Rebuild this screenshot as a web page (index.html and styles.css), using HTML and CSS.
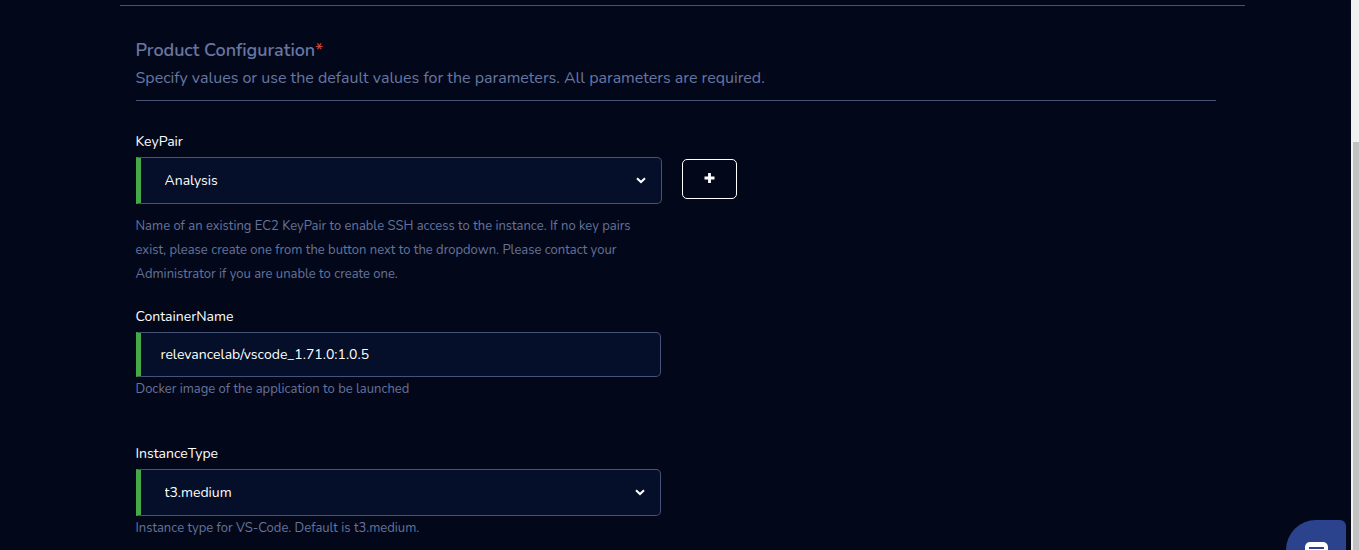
FILE: index.html
```html
<!DOCTYPE html>
<html lang="en">
<head>
  <meta charset="utf-8">
  <title>Product Configuration</title>
  <link rel="stylesheet" href="styles.css">
</head>
<body>
  <div class="page">
    <main class="content">
      <section class="config">
        <div class="config-header">
          <h2 class="config-title">Product Configuration<span class="required">*</span></h2>
          <p class="config-subtitle">Specify values or use the default values for the parameters. All parameters are required.</p>
        </div>

        <div class="field field-keypair">
          <label class="field-label" for="keypair">KeyPair</label>
          <div class="field-row">
            <div class="control control-select">
              <select id="keypair"><option>Analysis</option></select>
              <svg class="chevron" width="10" height="7" viewBox="0 0 10 7"><path d="M1 1.2 5 5 9 1.2"/></svg>
            </div>
            <button class="add-btn" type="button" aria-label="Add key pair">
              <svg width="11" height="10" viewBox="0 0 11 10"><path d="M5.5 0v10M.5 5h10"/></svg>
            </button>
          </div>
          <p class="field-help help-lines">Name of an existing EC2 KeyPair to enable SSH access to the instance. If no key pairs<br>exist, please create one from the button next to the dropdown. Please contact your<br>Administrator if you are unable to create one.</p>
        </div>

        <div class="field field-container">
          <label class="field-label" for="container">ContainerName</label>
          <div class="control control-input">
            <input id="container" type="text" value="relevancelab/vscode_1.71.0:1.0.5">
          </div>
          <p class="field-help">Docker image of the application to be launched</p>
        </div>

        <div class="field">
          <label class="field-label" for="instance">InstanceType</label>
          <div class="control control-select">
            <select id="instance"><option>t3.medium</option></select>
            <svg class="chevron" width="10" height="7" viewBox="0 0 10 7"><path d="M1 1.2 5 5 9 1.2"/></svg>
          </div>
          <p class="field-help">Instance type for VS-Code. Default is t3.medium.</p>
        </div>
      </section>
    </main>
    <div class="scroll-track"><div class="scroll-thumb"></div></div>
  </div>

  <div class="chat-widget">
    <svg width="24" height="24" viewBox="0 0 24 24"><rect x="0" y="0" width="23" height="20" rx="5" fill="#fff"/><path d="M4 6h15M4 11h15" stroke="#2b428c" stroke-width="2"/></svg>
  </div>
</body>
</html>
```
FILE: styles.css
```css
* {
  box-sizing: border-box;
}
body {
  margin: 0;
  background-color: #02081a;
  color: #fff;
  font-family: Nunito, Lato, sans-serif;
  font-size: 14px;
}
h2, p {
  margin: 0;
}
.page {
  display: flex;
  height: 550px;
  overflow: hidden;
}
.content {
  flex: 1;
  padding: 5px 106px 0 120px;
}
.config {
  padding: 32px 29px 0 15.5px;
  border-top: 1px solid #465379;
}
.config-header {
  height: 63px;
  border-bottom: 1px solid #465379;
  color: #6876a0;
}
.config-title {
  font-size: 18px;
  font-weight: 600;
  line-height: 24px;
  letter-spacing: -0.03px;
  font-variant-ligatures: common-ligatures;
}
.required {
  color: #c9443f;
}
.config-subtitle {
  margin-top: 4px;
  font-size: 16px;
  line-height: 24px;
}
.field-keypair {
  margin-top: 30px;
}
.field-label {
  display: block;
  height: 26px;
  line-height: 22px;
}
.field-row {
  display: flex;
  gap: 20px;
}
.control {
  position: relative;
  width: 525px;
  height: 47px;
  border: 1px solid #465379;
  border-left: 5px solid #45a948;
  border-radius: 0 5px 5px 0;
  background-color: #050f29;
}
.field-row .control {
  width: 526px;
}
.control-input {
  height: 45px;
}
.control select,
.control input {
  width: 100%;
  height: 100%;
  padding: 0 24px;
  border: none;
  outline: none;
  appearance: none;
  background: none;
  color: #fff;
  font: inherit;
}
.control input {
  padding: 0 20px;
}
.chevron {
  position: absolute;
  top: 19px;
  right: 15px;
  fill: none;
  stroke: #fff;
  stroke-width: 2;
}
.add-btn {
  width: 55px;
  height: 40px;
  margin-top: 2px;
  padding: 0 0 2px;
  border: 1px solid #fff;
  border-radius: 5px;
  background: none;
}
.add-btn svg {
  display: block;
  margin: auto;
  stroke: #fff;
  stroke-width: 2.8;
}
.field-help {
  color: #66739a;
  font-size: 13px;
  line-height: 24px;
  white-space: nowrap;
}
.help-lines {
  margin: 10px 0 20px;
}
.field-container {
  margin-bottom: 42px;
}
.scroll-track {
  width: 8px;
  padding: 142px 0 0 2px;
  background-color: #f0f0f0;
}
.scroll-thumb {
  height: 408px;
  background-color: #c1c1c1;
}
.chat-widget {
  position: fixed;
  top: 520px;
  left: 1286px;
  width: 60px;
  height: 60px;
  padding: 22px 0 0 19px;
  border-radius: 30px 6px 30px 30px;
  background-color: #2b428c;
}
```
